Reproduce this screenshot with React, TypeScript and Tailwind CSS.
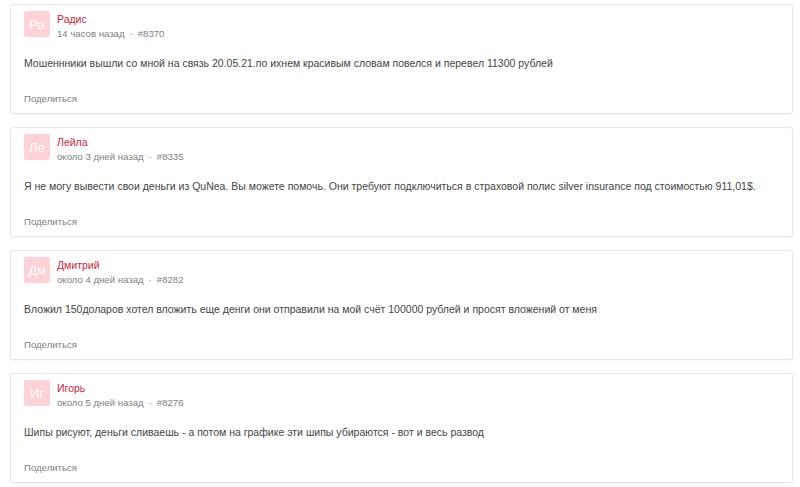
const reviews = [
  {
    initials: 'Ра',
    name: 'Радис',
    time: '14 часов назад',
    id: '#8370',
    text: 'Мошеннники вышли со мной на связь 20.05.21.по ихнем красивым словам повелся и перевел 11300 рублей',
  },
  {
    initials: 'Ле',
    name: 'Лейла',
    time: 'около 3 дней назад',
    id: '#8335',
    text: 'Я не могу вывести свои деньги из QuNea. Вы можете помочь. Они требуют подключиться в страховой полис silver insurance под стоимостью 911,01$.',
  },
  {
    initials: 'Дм',
    name: 'Дмитрий',
    time: 'около 4 дней назад',
    id: '#8282',
    text: 'Вложил 150доларов хотел вложить еще денги они отправили на мой счёт 100000 рублей и просят вложений от меня',
  },
  {
    initials: 'Иг',
    name: 'Игорь',
    time: 'около 5 дней назад',
    id: '#8276',
    text: 'Шипы рисуют, деньги сливаешь - а потом на графике эти шипы убираются - вот и весь развод',
  },
]

export default function App() {
  return (
    <div
      className="w-[800px] h-[487px] bg-white pl-[10px] pr-[7px] pt-[4px] flex flex-col gap-[13px] overflow-hidden"
      style={{ fontFamily: '"Liberation Sans", Arial, sans-serif' }}
    >
      {reviews.map((r) => (
        <ReviewCard key={r.id} review={r} />
      ))}
    </div>
  )
}

function ReviewCard({ review }: { review: (typeof reviews)[number] }) {
  return (
    <div className="h-[110px] shrink-0 border border-[#e6e6e6] rounded-[3px] shadow-[0_1px_2px_rgba(0,0,0,0.04)] px-[13px] pt-[6px] flex flex-col">
      {/* Header */}
      <div className="flex items-start gap-[7px]">
        <div className="w-[26px] h-[26px] shrink-0 bg-[#ffd2d7] rounded-[2px] flex items-center justify-center text-white text-[13px] leading-none">
          {review.initials}
        </div>
        <div className="flex flex-col">
          <span className="text-[10.5px] leading-[14px] text-[#d0243b] mt-[1px]">{review.name}</span>
          <span className="text-[9.6px] leading-[12px] text-[#808080] mt-[2px]">
            {review.time}
            <span className="mx-[5px]">·</span>
            {review.id}
          </span>
        </div>
      </div>

      {/* Body */}
      <p className="mt-[16px] text-[10.5px] leading-[14px] text-[#444]">{review.text}</p>

      {/* Share */}
      <span className="mt-[23px] text-[9.6px] leading-[12px] text-[#808080]">Поделиться</span>
    </div>
  )
}
